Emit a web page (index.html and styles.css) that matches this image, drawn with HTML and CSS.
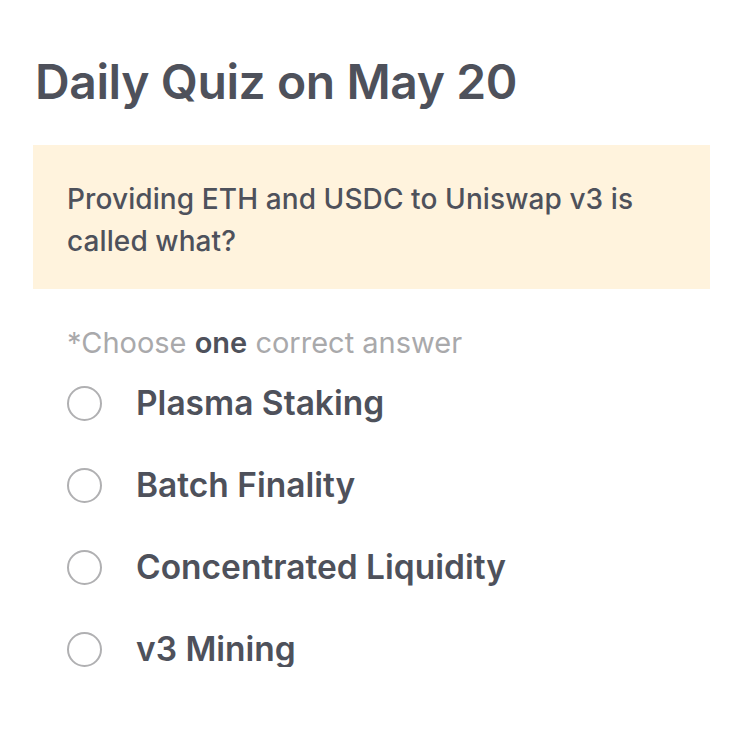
FILE: index.html
```html
<!DOCTYPE html>
<html lang="en">
<head>
    <meta charset="UTF-8">
    <meta name="viewport" content="width=device-width, initial-scale=1.0">
    <title>Daily Quiz</title>
    <link rel="stylesheet" href="styles.css">
</head>
<body>
    <h1>Daily Quiz on May 20</h1>

    <!-- Pregunta del dia -->
    <div class="pregunta">
        Providing ETH and USDC to Uniswap v3 is called what?
    </div>

    <p class="ayuda">*Choose <b>one</b> correct answer</p>

    <!-- Respuestas -->
    <div class="respuestas">
        <label class="respuesta"><span class="circulo"></span> Plasma Staking</label>
        <label class="respuesta"><span class="circulo"></span> Batch Finality</label>
        <label class="respuesta"><span class="circulo"></span> Concentrated Liquidity</label>
        <label class="respuesta"><span class="circulo"></span> v3 Mining</label>
    </div>
</body>
</html>
```

FILE: styles.css
```css
body {
    margin: 0;
    padding: 0 33px;
    font-family: Inter, "Noto Sans", sans-serif;
    background-color: #fff;
    color: #4e515b;
}

h1 {
    margin: 52px 0 0 2px;
    font-size: 48px;
    font-weight: 600;
    line-height: 60px;
    letter-spacing: -0.4px;
}

/* Caja amarilla con la pregunta */
.pregunta {
    margin-top: 33px;
    width: 677px;
    box-sizing: border-box;
    padding: 33px 45px 27px 34px;
    background-color: #fff3dd;
    font-size: 28px;
    font-weight: 500;
    line-height: 42px;
    letter-spacing: 0.1px;
}

.ayuda {
    margin: 36px 0 0 34px;
    font-size: 29px;
    line-height: 35px;
    color: #a9a9ab;
}

.ayuda b {
    font-weight: 600;
    color: #4e515b;
}

.respuestas {
    display: flex;
    flex-direction: column;
    gap: 47px;
    margin: 26px 0 0 34px;
}

.respuesta {
    display: flex;
    align-items: center;
    gap: 34px;
    font-size: 33.5px;
    font-weight: 600;
    line-height: 35px;
}

.circulo {
    width: 31px;
    height: 31px;
    border: 2px solid #b0b0b2;
    border-radius: 50%;
    flex-shrink: 0;
}
```
